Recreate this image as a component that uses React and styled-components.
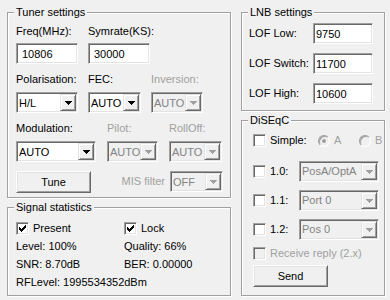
import styled, { createGlobalStyle } from 'styled-components';

const GlobalStyle = createGlobalStyle`
  html, body {
    margin: 0;
    padding: 0;
    background: #f0f0f0;
  }
  body {
    font-family: "Liberation Sans", Arial, sans-serif;
    font-size: 11px;
    color: #000;
  }
`;

const Window = styled.div`
  width: 390px;
  height: 300px;
  box-sizing: border-box;
  padding: 12px 0 0 7px;
  display: flex;
  gap: 10px;
  background: #f0f0f0;
`;

const Column = styled.div`
  width: ${p => p.$w}px;
  display: flex;
  flex-direction: column;
  gap: 9px;
`;

const Group = styled.section`
  position: relative;
  box-sizing: border-box;
  height: ${p => p.$h}px;
  border: 1px solid #a0a0a0;
  box-shadow: inset 1px 1px #fff, 1px 1px #fff;
  padding: ${p => p.$pad};
`;

const GroupTitle = styled.span`
  position: absolute;
  top: -7px;
  left: 6px;
  padding: 0 2px;
  background: #f0f0f0;
  line-height: 13px;
  white-space: nowrap;
`;

const Stack = styled.div`
  display: flex;
  flex-direction: column;
  gap: ${p => p.$gap || 0}px;
`;

const Row = styled.div`
  display: flex;
  align-items: ${p => p.$align || 'flex-end'};
  gap: ${p => p.$gap || 0}px;
  height: ${p => (p.$h ? `${p.$h}px` : 'auto')};
  margin-top: ${p => p.$mt || 0}px;
`;

const Field = styled.div`
  display: flex;
  flex-direction: column;
  gap: ${p => p.$gap || 6}px;
`;

const Label = styled.span`
  line-height: 13px;
  white-space: nowrap;
  width: ${p => (p.$w ? `${p.$w}px` : 'auto')};
  flex: none;
  color: ${p => (p.$disabled ? '#a0a0a0' : '#000')};
`;

const sunken = `
  border: 1px solid;
  border-color: #a0a0a0 #fff #fff #a0a0a0;
  box-shadow: inset 1px 1px #696969, inset -1px -1px #e3e3e3;
`;

const Edit = styled.div`
  box-sizing: border-box;
  width: ${p => p.$w}px;
  height: 21px;
  background: #fff;
  ${sunken}
  padding-left: ${p => p.$pad}px;
  display: flex;
  align-items: center;
  flex: none;
`;

const ComboBox = styled.div`
  box-sizing: border-box;
  width: ${p => p.$w}px;
  height: 21px;
  flex: none;
  display: flex;
  padding: 1px;
  background: ${p => (p.$disabled ? '#f0f0f0' : '#fff')};
  color: ${p => (p.$disabled ? '#838383' : '#000')};
  ${sunken}
`;

const ComboText = styled.span`
  flex: 1;
  display: flex;
  align-items: center;
  padding-left: 1px;
  overflow: hidden;
  white-space: nowrap;
`;

const ArrowButton = styled.span`
  box-sizing: border-box;
  width: 16px;
  flex: none;
  display: flex;
  align-items: center;
  justify-content: center;
  background: #f0f0f0;
  border: 1px solid;
  border-color: #e3e3e3 #696969 #696969 #e3e3e3;
  box-shadow: inset 1px 1px #fff, inset -1px -1px #a0a0a0;
  color: ${p => (p.$disabled ? '#a0a0a0' : '#000')};
`;

const PushButton = styled.button`
  box-sizing: border-box;
  width: 75px;
  height: 22px;
  flex: none;
  padding: 0;
  margin-top: ${p => p.$mt || 0}px;
  font: inherit;
  color: #000;
  background: #f0f0f0;
  border: 1px solid;
  border-color: #fff #696969 #696969 #fff;
  box-shadow: inset 1px 1px #e3e3e3, inset -1px -1px #a0a0a0;
`;

const CheckBox = styled.span`
  box-sizing: border-box;
  width: 13px;
  height: 13px;
  flex: none;
  display: flex;
  align-items: center;
  justify-content: center;
  background: ${p => (p.$disabled ? '#f0f0f0' : '#fff')};
  ${sunken}
`;

const RadioDot = styled.span`
  box-sizing: border-box;
  width: 12px;
  height: 12px;
  flex: none;
  border-radius: 50%;
  display: flex;
  align-items: center;
  justify-content: center;
  background: #f0f0f0;
  border: 1px solid;
  border-color: #a0a0a0 #fff #fff #a0a0a0;
  box-shadow: inset 1px 1px #a0a0a0;
  &::after {
    content: '';
    width: 4px;
    height: 4px;
    border-radius: 50%;
    background: ${p => (p.$checked ? '#a0a0a0' : 'transparent')};
  }
`;

const CheckLine = styled.div`
  display: flex;
  align-items: center;
  gap: 4px;
  height: ${p => p.$h || 13}px;
  margin-top: ${p => p.$mt || 0}px;
  line-height: 13px;
  white-space: nowrap;
`;

const RadioOption = styled.div`
  display: flex;
  align-items: center;
  gap: 4px;
  width: ${p => (p.$w ? `${p.$w}px` : 'auto')};
`;

const StatsGrid = styled.div`
  display: grid;
  grid-template-columns: 108px auto;
  grid-auto-rows: 13px;
  row-gap: 5px;
  line-height: 13px;
  white-space: nowrap;
`;

const MisGroup = styled.div`
  margin-left: auto;
  display: flex;
  align-items: center;
  gap: 5px;
`;

function Arrow({ disabled }) {
  return (
    <ArrowButton $disabled={disabled}>
      <svg width="7" height="4" viewBox="0 0 7 4" fill="currentColor">
        <path d="M0 0h7v1H6v1H5v1H4v1H3V3H2V2H1V1H0z" />
      </svg>
    </ArrowButton>
  );
}

function Combo({ w, value, disabled }) {
  return (
    <ComboBox $w={w} $disabled={disabled}>
      <ComboText>{value}</ComboText>
      <Arrow disabled={disabled} />
    </ComboBox>
  );
}

function Check({ checked, disabled }) {
  return (
    <CheckBox $disabled={disabled}>
      {checked && (
        <svg width="7" height="7" viewBox="0 0 7 7" fill="#000">
          <path d="M0 2h1v3H0zM1 3h1v3H1zM2 4h1v3H2zM3 3h1v3H3zM4 2h1v3H4zM5 1h1v3H5zM6 0h1v3H6z" />
        </svg>
      )}
    </CheckBox>
  );
}

function PortRow({ label, value, mt }) {
  return (
    <CheckLine $h={21} $mt={mt}>
      <Check />
      <Label $w={25}>{label}</Label>
      <Combo w={80} value={value} disabled />
    </CheckLine>
  );
}

export default function App() {
  return (
    <>
      <GlobalStyle />
      <Window>
        <Column $w={224}>
          <Group $h={186} $pad="12px 7px 0 8px">
            <GroupTitle>Tuner settings</GroupTitle>
            <Stack $gap={9}>
              <Row $gap={10}>
                <Field $gap={5}>
                  <Label>Freq(MHz):</Label>
                  <Edit $w={62} $pad={5}>10806</Edit>
                </Field>
                <Field $gap={5}>
                  <Label>Symrate(KS):</Label>
                  <Edit $w={62} $pad={5}>30000</Edit>
                </Field>
              </Row>
              <Row $gap={10}>
                <Field>
                  <Label>Polarisation:</Label>
                  <Combo w={62} value="H/L" />
                </Field>
                <Field>
                  <Label>FEC:</Label>
                  <Combo w={53} value="AUTO" />
                </Field>
                <Field>
                  <Label $disabled>Inversion:</Label>
                  <Combo w={52} value="AUTO" disabled />
                </Field>
              </Row>
              <Row $gap={11}>
                <Field>
                  <Label>Modulation:</Label>
                  <Combo w={80} value="AUTO" />
                </Field>
                <Field>
                  <Label $disabled>Pilot:</Label>
                  <Combo w={51} value="AUTO" disabled />
                </Field>
                <Field>
                  <Label $disabled>RollOff:</Label>
                  <Combo w={53} value="AUTO" disabled />
                </Field>
              </Row>
              <Row $align="flex-start">
                <PushButton>Tune</PushButton>
                <MisGroup>
                  <Label $disabled>MIS filter</Label>
                  <Combo w={53} value="OFF" disabled />
                </MisGroup>
              </Row>
            </Stack>
          </Group>

          <Group $h={89} $pad="14px 0 0 8px">
            <GroupTitle>Signal statistics</GroupTitle>
            <StatsGrid>
              <CheckLine>
                <Check checked />
                <span>Present</span>
              </CheckLine>
              <CheckLine>
                <Check checked />
                <span>Lock</span>
              </CheckLine>
              <span>Level: 100%</span>
              <span>Quality: 66%</span>
              <span>SNR: 8.70dB</span>
              <span>BER: 0.00000</span>
              <span>RFLevel: 1995534352dBm</span>
            </StatsGrid>
          </Group>
        </Column>

        <Column $w={144}>
          <Group $h={99} $pad="10px 11px 0 7px">
            <GroupTitle>LNB settings</GroupTitle>
            <Stack $gap={9}>
              <Row $align="center">
                <Label $w={64}>LOF Low:</Label>
                <Edit $w={60} $pad={2}>9750</Edit>
              </Row>
              <Row $align="center">
                <Label $w={64}>LOF Switch:</Label>
                <Edit $w={60} $pad={2}>11700</Edit>
              </Row>
              <Row $align="center">
                <Label $w={64}>LOF High:</Label>
                <Edit $w={60} $pad={2}>10600</Edit>
              </Row>
            </Stack>
          </Group>

          <Group $h={176} $pad="9px 0 0 11px">
            <GroupTitle>DiSEqC</GroupTitle>
            <Stack>
              <CheckLine $h={21}>
                <Check />
                <Label $w={44}>Simple:</Label>
                <RadioOption $w={37}>
                  <RadioDot $checked />
                  <Label $disabled>A</Label>
                </RadioOption>
                <RadioOption>
                  <RadioDot />
                  <Label $disabled>B</Label>
                </RadioOption>
              </CheckLine>
              <PortRow label="1.0:" value="PosA/OptA" mt={10} />
              <PortRow label="1.1:" value="Port 0" mt={8} />
              <PortRow label="1.2:" value="Pos 0" mt={8} />
              <CheckLine $mt={7}>
                <Check disabled />
                <Label $disabled>Receive reply (2.x)</Label>
              </CheckLine>
              <PushButton $mt={5}>Send</PushButton>
            </Stack>
          </Group>
        </Column>
      </Window>
    </>
  );
}
